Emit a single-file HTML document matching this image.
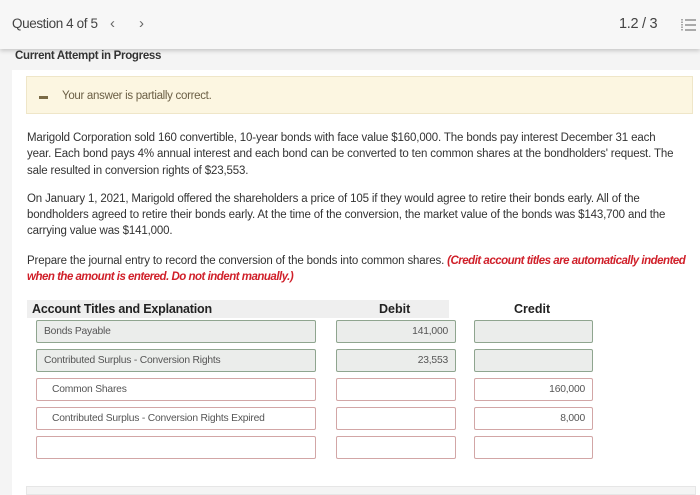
<!DOCTYPE html>
<html><head><meta charset="utf-8"><style>
*{margin:0;padding:0;box-sizing:border-box}
body{width:700px;height:495px;overflow:hidden;background:#f4f4f4;font-family:"Liberation Sans",sans-serif;position:relative;color:#333}
.hdr{position:absolute;left:0;top:0;width:700px;height:49px;background:#f7f7f7;box-shadow:0 2px 4px rgba(0,0,0,.18)}
.abs{position:absolute;white-space:nowrap}
.card{position:absolute;left:12px;top:70px;width:688px;height:425px;background:#fff}
.alert{position:absolute;left:26px;top:76px;width:667px;height:38px;background:#fcf6e1;border:1px solid #efe6c8}
p.l{position:absolute;left:27px;font-size:11.5px;letter-spacing:-0.15px;color:#333;white-space:nowrap}
.th{position:absolute;left:27px;top:300px;width:422px;height:18px;background:#efefef}
.in{position:absolute;height:23px;border:1px solid #c9c9c9;border-radius:2px;background:#fff;font-size:10.3px;color:#555;line-height:21px;letter-spacing:-0.2px;white-space:nowrap}
.g{background:#ebedeb;border-color:#8fa58f}
.r{border-color:#d2a6a6}
.n{text-align:right;padding-right:7px}
i.red{color:#d0202a;font-weight:bold;letter-spacing:-0.5px}
</style></head><body>
<div class="hdr"></div>
<div class="abs" style="left:12px;top:16px;font-size:13.5px;color:#444;letter-spacing:-0.4px">Question 4 of 5</div>
<div class="abs" style="left:110px;top:15px;font-size:15px;color:#666">&lsaquo;</div>
<div class="abs" style="left:139px;top:15px;font-size:15px;color:#666">&rsaquo;</div>
<div class="abs" style="left:619px;top:16px;font-size:14.5px;color:#444;letter-spacing:-0.3px">1.2 / 3</div>
<svg class="abs" style="left:681px;top:18px" width="15" height="14"><g stroke="#777" stroke-width="1.2"><line x1="4" y1="2" x2="15" y2="2"/><line x1="4" y1="7" x2="15" y2="7"/><line x1="4" y1="12" x2="15" y2="12"/><line x1="1" y1="1" x2="1" y2="13" stroke-dasharray="1.5 1"/></g></svg>
<div class="abs" style="left:15px;top:50px;font-size:11.5px;font-weight:bold;color:#333;letter-spacing:-0.3px">Current Attempt in Progress</div>
<div class="card"></div>
<div class="alert"></div>
<div class="abs" style="left:39px;top:96px;width:9px;height:3px;background:#7a6a45"></div>
<div class="abs" style="left:62px;top:90px;font-size:11.5px;color:#6b5f45;letter-spacing:-0.3px">Your answer is partially correct.</div>
<p class="l" style="top:132px">Marigold Corporation sold 160 convertible, 10-year bonds with face value $160,000. The bonds pay interest December 31 each</p>
<p class="l" style="top:148px">year. Each bond pays 4% annual interest and each bond can be converted to ten common shares at the bondholders' request. The</p>
<p class="l" style="top:165px">sale resulted in conversion rights of $23,553.</p>
<p class="l" style="top:193px">On January 1, 2021, Marigold offered the shareholders a price of 105 if they would agree to retire their bonds early. All of the</p>
<p class="l" style="top:209px">bondholders agreed to retire their bonds early. At the time of the conversion, the market value of the bonds was $143,700 and the</p>
<p class="l" style="top:225px">carrying value was $141,000.</p>
<p class="l" style="top:255px">Prepare the journal entry to record the conversion of the bonds into common shares. <i class="red">(Credit account titles are automatically indented</i></p>
<p class="l" style="top:271px"><i class="red">when the amount is entered. Do not indent manually.)</i></p>
<div class="th"></div>
<div class="abs" style="left:32px;top:302px;font-size:12.5px;font-weight:bold;color:#222;letter-spacing:-0.2px">Account Titles and Explanation</div>
<div class="abs" style="left:379px;top:302px;font-size:12.5px;font-weight:bold;color:#222">Debit</div>
<div class="abs" style="left:514px;top:302px;font-size:12.5px;font-weight:bold;color:#222">Credit</div>

<div class="in g" style="left:36px;top:320px;width:280px;padding-left:7px">Bonds Payable</div>
<div class="in g n" style="left:336px;top:320px;width:120px">141,000</div>
<div class="in g" style="left:474px;top:320px;width:119px"></div>

<div class="in g" style="left:36px;top:349px;width:280px;padding-left:7px">Contributed Surplus - Conversion Rights</div>
<div class="in g n" style="left:336px;top:349px;width:120px">23,553</div>
<div class="in g" style="left:474px;top:349px;width:119px"></div>

<div class="in r" style="left:36px;top:378px;width:280px;padding-left:15px">Common Shares</div>
<div class="in r" style="left:336px;top:378px;width:120px"></div>
<div class="in r n" style="left:474px;top:378px;width:119px">160,000</div>

<div class="in r" style="left:36px;top:407px;width:280px;padding-left:15px">Contributed Surplus - Conversion Rights Expired</div>
<div class="in r" style="left:336px;top:407px;width:120px"></div>
<div class="in r n" style="left:474px;top:407px;width:119px">8,000</div>

<div class="in r" style="left:36px;top:436px;width:280px"></div>
<div class="in r" style="left:336px;top:436px;width:120px"></div>
<div class="in r" style="left:474px;top:436px;width:119px"></div>

<div class="abs" style="left:26px;top:486px;width:670px;height:9px;background:#f4f4f4;border:1px solid #e6e6e6"></div>
</body></html>
